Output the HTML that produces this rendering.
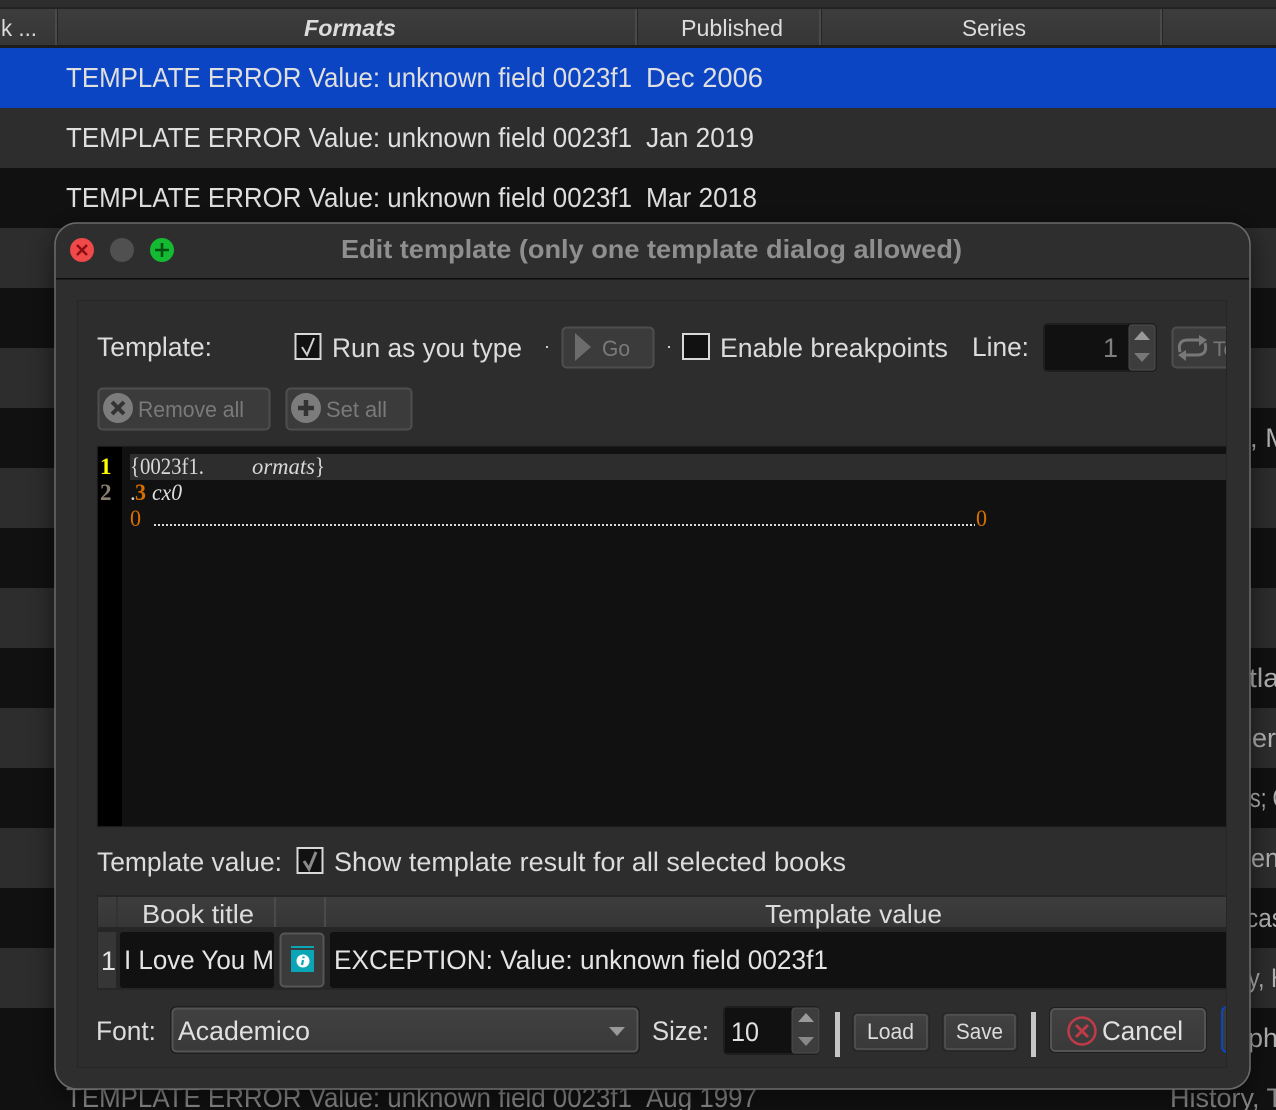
<!DOCTYPE html>
<html><head><meta charset="utf-8"><style>
html,body{margin:0;padding:0;background:#111;width:1276px;height:1110px;overflow:hidden}
svg{display:block}
text{font-family:"Liberation Sans",sans-serif;white-space:pre}
.s text{font-family:"Liberation Serif",serif}
</style></head><body>
<svg width="1276" height="1110" viewBox="0 0 1276 1110" xmlns="http://www.w3.org/2000/svg">
<defs>
<linearGradient id="hd" x1="0" y1="0" x2="0" y2="1"><stop offset="0" stop-color="#3d3d3d"/><stop offset="1" stop-color="#363636"/></linearGradient>
<linearGradient id="btn" x1="0" y1="0" x2="0" y2="1"><stop offset="0" stop-color="#414141"/><stop offset="1" stop-color="#393939"/></linearGradient>
<clipPath id="c"><rect x="77" y="300" width="1149" height="767"/></clipPath>
<filter id="sh" x="-10%" y="-10%" width="120%" height="120%"><feDropShadow dx="0" dy="6" stdDeviation="14" flood-color="#000" flood-opacity=".55"/></filter>
</defs>
<!-- table stripes -->
<rect width="1276" height="1110" fill="#111"/>
<rect x="0" y="0" width="1276" height="7" fill="#2d2d2d"/>
<rect x="0" y="7" width="1276" height="2" fill="#222"/>
<rect x="0" y="9" width="1276" height="36" fill="url(#hd)"/>
<rect x="0" y="45" width="1276" height="3" fill="#1c1c1c"/>
<rect x="0" y="48" width="1276" height="60" fill="#0b45c4"/>
<g fill="#2d2d2d">
<rect y="108" width="1276" height="60"/><rect y="228" width="1276" height="60"/><rect y="348" width="1276" height="60"/><rect y="468" width="1276" height="60"/><rect y="588" width="1276" height="60"/><rect y="708" width="1276" height="60"/><rect y="828" width="1276" height="60"/><rect y="948" width="1276" height="60"/>
</g>
<g fill="#4a4a4a"><rect x="55" y="9" width="2" height="36"/><rect x="635" y="9" width="2" height="36"/><rect x="819" y="9" width="2" height="36"/><rect x="1160" y="9" width="2" height="36"/></g>
<g fill="#262626"><rect x="57" y="9" width="1" height="37"/><rect x="637" y="9" width="1" height="37"/><rect x="821" y="9" width="1" height="37"/><rect x="1162" y="9" width="1" height="37"/></g>
<g fill="#dcdcdc" font-size="23.500">
<text x="1" y="36" textLength="36" lengthAdjust="spacingAndGlyphs">k ...</text>
<text x="304" y="36" textLength="92" lengthAdjust="spacingAndGlyphs" font-weight="700" font-style="italic">Formats</text>
<text x="681" y="36" textLength="102" lengthAdjust="spacingAndGlyphs">Published</text>
<text x="962" y="36" textLength="64" lengthAdjust="spacingAndGlyphs">Series</text>
</g>
<g fill="#dfdfdf" font-size="28">
<text x="66" y="87" textLength="566" lengthAdjust="spacingAndGlyphs">TEMPLATE ERROR Value: unknown field 0023f1</text>
<text x="646" y="87" textLength="117" lengthAdjust="spacingAndGlyphs">Dec 2006</text>
<text x="66" y="147" textLength="566" lengthAdjust="spacingAndGlyphs">TEMPLATE ERROR Value: unknown field 0023f1</text>
<text x="646" y="147" textLength="108" lengthAdjust="spacingAndGlyphs">Jan 2019</text>
<text x="66" y="207" textLength="566" lengthAdjust="spacingAndGlyphs">TEMPLATE ERROR Value: unknown field 0023f1</text>
<text x="646" y="207" textLength="111" lengthAdjust="spacingAndGlyphs">Mar 2018</text>
</g>
<g fill="#b4b4b4" font-size="27">
<text x="1250" y="447" textLength="38" lengthAdjust="spacingAndGlyphs">, M</text>
<text x="1249" y="687" textLength="30" lengthAdjust="spacingAndGlyphs">tla</text>
<text x="1252" y="747" textLength="24" lengthAdjust="spacingAndGlyphs">er</text>
<text x="1250" y="807" textLength="38" lengthAdjust="spacingAndGlyphs">s; C</text>
<text x="1251" y="867" textLength="28" lengthAdjust="spacingAndGlyphs">en</text>
<text x="1246" y="927" textLength="38" lengthAdjust="spacingAndGlyphs">cas</text>
<text x="1248" y="987" textLength="40" lengthAdjust="spacingAndGlyphs">y, H</text>
<text x="1248" y="1047" textLength="30" lengthAdjust="spacingAndGlyphs">ph</text>
</g>
<g fill="#8a8a8a" font-size="28">
<text x="66" y="1107" textLength="566" lengthAdjust="spacingAndGlyphs">TEMPLATE ERROR Value: unknown field 0023f1</text>
<text x="646" y="1107" textLength="111" lengthAdjust="spacingAndGlyphs">Aug 1997</text>
<text x="1170" y="1107" font-size="27">History, T</text>
</g>
<!-- dialog -->
<rect x="55" y="223" width="1195" height="866" rx="22" fill="#2d2d2d" stroke="#6b6b6b" stroke-width="1.5" filter="url(#sh)"/>
<rect x="56" y="278" width="1193" height="1.5" fill="#0c0c0c"/>
<circle cx="82" cy="250" r="12" fill="#f0494a"/>
<path d="M77 245l10 10M87 245l-10 10" stroke="#8c0f12" stroke-width="2.500" fill="none"/>
<circle cx="122" cy="250" r="12" fill="#505050"/>
<circle cx="162" cy="250" r="12" fill="#14bb32"/>
<path d="M162 243v14M155 250h14" stroke="#064f14" stroke-width="2.600" fill="none"/>
<text x="341" y="258" font-size="26" font-weight="700" fill="#8f8f8f" textLength="621" lengthAdjust="spacingAndGlyphs">Edit template (only one template dialog allowed)</text>
<rect x="77.500" y="300.500" width="1149" height="767" fill="#2d2d2d" stroke="#262626"/>
<g clip-path="url(#c)">
<g fill="#dcdcdc" font-size="27">
<text x="97" y="356" textLength="115" lengthAdjust="spacingAndGlyphs">Template:</text>
<text x="332" y="357" textLength="190" lengthAdjust="spacingAndGlyphs">Run as you type</text>
<text x="720" y="357" textLength="228" lengthAdjust="spacingAndGlyphs">Enable breakpoints</text>
<text x="972" y="356" textLength="57" lengthAdjust="spacingAndGlyphs">Line:</text>
<text x="97" y="871" textLength="185" lengthAdjust="spacingAndGlyphs">Template value:</text>
<text x="334" y="871" textLength="512" lengthAdjust="spacingAndGlyphs">Show template result for all selected books</text>
<text x="96" y="1040" textLength="60" lengthAdjust="spacingAndGlyphs">Font:</text>
<text x="652" y="1040" textLength="57" lengthAdjust="spacingAndGlyphs">Size:</text>
</g>
<!-- checkboxes -->
<rect x="295.500" y="334" width="25" height="25" fill="#111" stroke="#d8d8d8" stroke-width="2"/>
<path d="M302 347l5 8 7-17" fill="none" stroke="#d0d0d0" stroke-width="2"/>
<rect x="683" y="334" width="26" height="25" fill="#111" stroke="#d8d8d8" stroke-width="2"/>
<rect x="297.500" y="848" width="25" height="25" fill="#111" stroke="#d8d8d8" stroke-width="2"/>
<path d="M304 861l5 8 7-17" fill="none" stroke="#8a8a8a" stroke-width="3"/>
<rect x="546" y="346" width="2" height="2" fill="#ccc"/><rect x="668" y="346" width="2" height="2" fill="#ccc"/>
<!-- go -->
<rect x="562.500" y="327.500" width="91" height="40" rx="4" fill="#3b3b3b" stroke="#4e4e4e" stroke-width="2"/>
<path d="M575 333l16 14-16 14z" fill="#6c6c6c"/>
<text x="602" y="356" font-size="22" fill="#7a7a7a" textLength="28" lengthAdjust="spacingAndGlyphs">Go</text>
<!-- line spin -->
<rect x="1043" y="323" width="114" height="49" rx="5" fill="#1e1e1e"/>
<rect x="1045" y="325" width="84" height="45" fill="#111"/>
<rect x="1129" y="325" width="26" height="45" rx="3" fill="#3d3d3d" stroke="#4d4d4d"/>
<path d="M1142 331l8 9h-16z" fill="#9a9a9a"/><path d="M1142 362l8-9h-16z" fill="#777"/>
<text x="1103" y="357" font-size="27" fill="#808080">1</text>
<!-- toggle -->
<rect x="1172.500" y="327.500" width="70" height="40" rx="4" fill="#3b3b3b" stroke="#4e4e4e" stroke-width="2"/>
<path d="M1180 352q-3-12 8-12h14M1205 343q3 12-8 12h-14" fill="none" stroke="#787878" stroke-width="3"/>
<path d="M1199 335l8 5-8 6zM1186 350l-8 5 8 6z" fill="#787878"/>
<text x="1213" y="356" font-size="21" fill="#777">To</text>
<!-- remove / set -->
<rect x="98.500" y="388.500" width="171" height="41" rx="4" fill="#3b3b3b" stroke="#4e4e4e" stroke-width="2"/>
<circle cx="118" cy="408" r="15" fill="#7c7c7c"/>
<path d="M112 402l12 12M124 402l-12 12" stroke="#333" stroke-width="4"/>
<text x="138" y="417" font-size="22" fill="#7a7a7a" textLength="106" lengthAdjust="spacingAndGlyphs">Remove all</text>
<rect x="286.500" y="388.500" width="125" height="41" rx="4" fill="#3b3b3b" stroke="#4e4e4e" stroke-width="2"/>
<circle cx="306" cy="408" r="15" fill="#7c7c7c"/>
<path d="M306 400v16M298 408h16" stroke="#333" stroke-width="4.500"/>
<text x="326" y="417" font-size="22" fill="#7a7a7a" textLength="61" lengthAdjust="spacingAndGlyphs">Set all</text>
<!-- editor -->
<rect x="97" y="446" width="1140" height="381" fill="#111" stroke="#262626"/>
<rect x="98" y="447" width="24" height="379" fill="#000"/>
<rect x="130" y="454" width="1100" height="26" fill="#2d2d2d"/>
<g class="s" font-size="23">
<text x="100" y="474" fill="#ffff00" font-weight="700">1</text>
<text x="100" y="500" fill="#8a8072" font-weight="700">2</text>
<text x="130" y="474" fill="#d8d8d8" textLength="74" lengthAdjust="spacingAndGlyphs">{0023f1.</text>
<text x="252" y="474" fill="#d8d8d8" font-style="italic" textLength="63" lengthAdjust="spacingAndGlyphs">ormats</text>
<text x="315" y="474" fill="#d8d8d8" textLength="10" lengthAdjust="spacingAndGlyphs">}</text>
<text x="130" y="500" fill="#d8d8d8">.</text>
<text x="135" y="500" fill="#d96f00" font-weight="700" textLength="11" lengthAdjust="spacingAndGlyphs">3</text>
<text x="152" y="500" fill="#e0e0e0" font-style="italic" textLength="30" lengthAdjust="spacingAndGlyphs">cx0</text>
<text x="130" y="526" fill="#d96f00" textLength="11" lengthAdjust="spacingAndGlyphs">0</text>
<text x="976" y="526" fill="#d96f00" textLength="11" lengthAdjust="spacingAndGlyphs">0</text>
</g>
<line x1="154" y1="525" x2="975" y2="525" stroke="#ddd" stroke-width="2" stroke-dasharray="2 2"/>
<!-- results table -->
<rect x="97" y="895" width="1140" height="95" fill="#262626"/>
<rect x="98" y="897" width="1130" height="30" fill="url(#hd)"/>
<rect x="116" y="897" width="2" height="30" fill="#333"/><rect x="274" y="897" width="2" height="30" fill="#4a4a4a"/><rect x="324" y="897" width="2" height="30" fill="#4a4a4a"/>
<text x="142" y="923" font-size="26" fill="#dcdcdc" textLength="112" lengthAdjust="spacingAndGlyphs">Book title</text>
<text x="765" y="923" font-size="26" fill="#dcdcdc" textLength="177" lengthAdjust="spacingAndGlyphs">Template value</text>
<rect x="98" y="932" width="18" height="56" fill="#363636"/>
<rect x="120" y="932" width="154" height="56" rx="3" fill="#111"/>
<rect x="330" y="932" width="900" height="56" rx="3" fill="#111"/>
<rect x="280.500" y="933.500" width="43" height="53" rx="4" fill="#3b3b3b" stroke="#565656" stroke-width="2"/>
<path d="M291 946h23v2h-23zM291 950h23v22h-23z" fill="#0aa6b5"/>
<circle cx="303" cy="961" r="6.500" fill="#fff"/>
<path d="M303.500 956.500v1.800M303 960l-1 5" stroke="#0aa6b5" stroke-width="2.200" fill="none"/>
<g fill="#e4e4e4" font-size="27">
<text x="101" y="970">1</text>
<text x="124" y="969" textLength="150" lengthAdjust="spacingAndGlyphs">I Love You M</text>
<text x="334" y="969" textLength="494" lengthAdjust="spacingAndGlyphs">EXCEPTION: Value: unknown field 0023f1</text>
</g>
<!-- font row -->
<rect x="170" y="1006" width="470" height="48" rx="6" fill="#1f1f1f"/>
<rect x="172.500" y="1008.500" width="465" height="43" rx="4" fill="url(#btn)" stroke="#545454" stroke-width="2"/>
<text x="178" y="1040" font-size="27" fill="#e0e0e0" textLength="132" lengthAdjust="spacingAndGlyphs">Academico</text>
<path d="M609 1027h16l-8 9z" fill="#999"/>
<rect x="723" y="1006" width="97" height="49" rx="5" fill="#1e1e1e"/>
<rect x="725" y="1008" width="67" height="45" fill="#111"/>
<rect x="792" y="1008" width="27" height="45" rx="3" fill="#3d3d3d" stroke="#4d4d4d"/>
<path d="M806 1013l8 9h-16z" fill="#9a9a9a"/><path d="M806 1046l8-9h-16z" fill="#888"/>
<text x="731" y="1041" font-size="27" fill="#e0e0e0" textLength="28" lengthAdjust="spacingAndGlyphs">10</text>
<rect x="835" y="1012" width="5" height="45" fill="#c6c6c6"/><rect x="1031" y="1012" width="5" height="45" fill="#c6c6c6"/>
<rect x="853" y="1013" width="76" height="38" rx="4" fill="url(#btn)" stroke="#1f1f1f"/>
<rect x="855" y="1015" width="72" height="34" rx="3" fill="url(#btn)" stroke="#525252" stroke-width="1.500"/>
<text x="867" y="1039" font-size="22" fill="#dcdcdc" textLength="47" lengthAdjust="spacingAndGlyphs">Load</text>
<rect x="943" y="1013" width="74" height="38" rx="4" fill="url(#btn)" stroke="#1f1f1f"/>
<rect x="945" y="1015" width="70" height="34" rx="3" fill="url(#btn)" stroke="#525252" stroke-width="1.500"/>
<text x="956" y="1039" font-size="22" fill="#dcdcdc" textLength="47" lengthAdjust="spacingAndGlyphs">Save</text>
<rect x="1049" y="1007" width="158" height="46" rx="5" fill="#1f1f1f"/>
<rect x="1051" y="1009" width="154" height="42" rx="4" fill="url(#btn)" stroke="#545454" stroke-width="2"/>
<circle cx="1082" cy="1031" r="13.500" fill="none" stroke="#c13a47" stroke-width="2.500"/>
<path d="M1076 1025l12 12M1088 1025l-12 12" stroke="#c13a47" stroke-width="3"/>
<text x="1102" y="1040" font-size="27" fill="#e0e0e0" textLength="81" lengthAdjust="spacingAndGlyphs">Cancel</text>
<rect x="1222" y="1007" width="20" height="45" rx="5" fill="#3a3a3a" stroke="#0b45c4" stroke-width="2"/>
</g>
</svg>
</body></html>
